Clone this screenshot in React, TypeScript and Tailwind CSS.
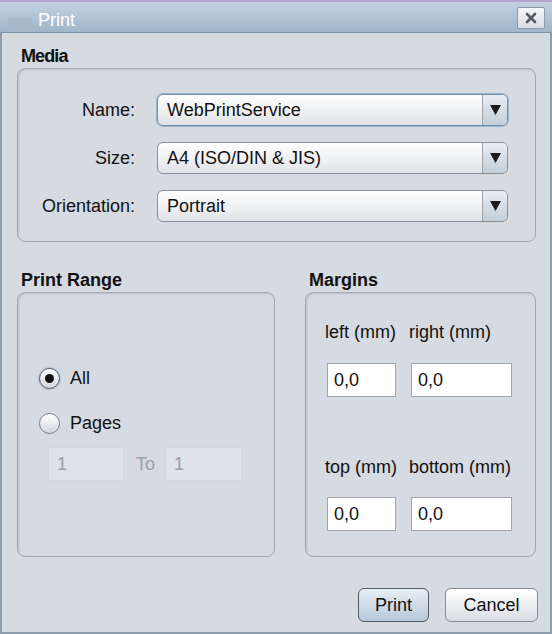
import React from 'react'

const font = { fontFamily: '"Liberation Sans", Arial, sans-serif' }

function Combo({ value, focused }: { value: string; focused?: boolean }) {
  return (
    <div
      className={`flex h-[32px] w-[351px] items-stretch rounded-[6px] border bg-gradient-to-b from-white via-[#f1f2f4] to-[#dfe2e6] ${
        focused
          ? 'border-[#6f8fb0] shadow-[0_0_0_1px_#9db6cf]'
          : 'border-[#8a8f97]'
      }`}
    >
      <div className="flex flex-1 items-center pl-[9px] text-[18px] text-[#111]">{value}</div>
      <div className="flex w-[25px] items-center justify-center rounded-r-[5px] border-l border-[#9aa0a8] bg-gradient-to-b from-[#e7edf3] to-[#c3cfdb]">
        <svg width="11" height="10" viewBox="0 0 11 10">
          <path d="M0 0h11L5.5 10z" fill="#1b1b1b" />
        </svg>
      </div>
    </div>
  )
}

function Radio({ checked, label }: { checked?: boolean; label: string }) {
  return (
    <div className="flex items-center gap-[10px]">
      <div
        className={`flex h-[21px] w-[21px] items-center justify-center rounded-full border bg-gradient-to-b from-white to-[#d3d7dd] ${
          checked ? 'border-[#4d5866] shadow-[0_0_0_1px_#b8c8d8]' : 'border-[#777d86]'
        }`}
      >
        {checked && <div className="h-[9px] w-[9px] rounded-full bg-[#111]" />}
      </div>
      <span className="text-[18px] text-[#111]">{label}</span>
    </div>
  )
}

function Field({ value, w }: { value: string; w: string }) {
  return (
    <div className={`flex h-[34px] ${w} items-center border border-[#a3a7ad] bg-white pl-[6px] text-[18px] text-[#111]`}>
      {value}
    </div>
  )
}

export default function App() {
  return (
    <div className="h-[634px] w-[552px] overflow-hidden bg-[#d6dae1]" style={font}>
      <div className="h-[2px] bg-[#b9a3cb]" />
      {/* title bar */}
      <div className="relative flex h-[30px] items-end bg-gradient-to-b from-[#c3d2e0] to-[#a0b5ca]">
        <div className="ml-[8px] h-[14px] w-[24px] bg-[#a6b9cc]" />
        <span className="mb-[3px] ml-[6px] text-[18px] leading-none text-white">Print</span>
        <div className="absolute right-[7px] top-[5px] flex h-[22px] w-[28px] items-center justify-center rounded-[2px] border border-[#8e99a6] bg-gradient-to-b from-[#f4f6f8] to-[#d9dee4]">
          <svg width="12" height="12" viewBox="0 0 12 12">
            <path d="M2 2l8 8M10 2l-8 8" stroke="#555b63" strokeWidth="2.6" strokeLinecap="round" />
          </svg>
        </div>
      </div>
      {/* body */}
      <div className="h-[602px] border-x-2 border-b-2 border-t border-[#8e9cad] border-t-[#7b8fa5] bg-[#d6dae1] pl-[15px] pr-[14px]">
        <div className="pl-[4px] pt-[14px] text-[18px] font-bold leading-[19px] tracking-[-0.9px] text-[#111]">Media</div>
        <div className="mt-[2px] h-[174px] rounded-[8px] border border-[#a4a9b1] pt-[25px] shadow-[inset_1px_1px_2px_rgba(0,0,0,0.12)]">
          <div className="flex flex-col gap-[16px]">
            <div className="flex items-center">
              <div className="w-[117px] text-right text-[18px] text-[#111]">Name:</div>
              <div className="ml-[22px]">
                <Combo value="WebPrintService" focused />
              </div>
            </div>
            <div className="flex items-center">
              <div className="w-[117px] text-right text-[18px] text-[#111]">Size:</div>
              <div className="ml-[22px]">
                <Combo value="A4 (ISO/DIN & JIS)" />
              </div>
            </div>
            <div className="flex items-center">
              <div className="w-[117px] text-right text-[18px] text-[#111]">Orientation:</div>
              <div className="ml-[22px]">
                <Combo value="Portrait" />
              </div>
            </div>
          </div>
        </div>

        <div className="mt-[29px] flex gap-[30px]">
          <div className="flex w-[258px] flex-col">
            <div className="pl-[4px] text-[18px] font-bold leading-[19px] text-[#111]">Print Range</div>
            <div className="mt-[2px] h-[265px] rounded-[8px] border border-[#a4a9b1] pl-[21px] pt-[72px] shadow-[inset_1px_1px_2px_rgba(0,0,0,0.12)]">
              <div className="flex flex-col gap-[18px]">
                <Radio checked label="All" />
                <Radio label="Pages" />
              </div>
              <div className="mt-[10px] flex items-center pl-[9px] text-[18px] text-[#9aa0a8]">
                <div className="flex h-[34px] w-[76px] items-center border border-[#d3d6db] bg-[#dfe2e7] pl-[8px]">1</div>
                <span className="ml-[12px] mr-[10px]">To</span>
                <div className="flex h-[34px] w-[77px] items-center border border-[#d3d6db] bg-[#dfe2e7] pl-[8px]">1</div>
              </div>
            </div>
          </div>
          <div className="flex w-[231px] flex-col">
            <div className="pl-[4px] text-[18px] font-bold leading-[19px] text-[#111]">Margins</div>
            <div className="mt-[2px] h-[265px] rounded-[8px] border border-[#a4a9b1] pl-[19px] pt-[26px] shadow-[inset_1px_1px_2px_rgba(0,0,0,0.12)]">
              <div className="flex text-[18px] text-[#111]">
                <span className="w-[84px]">left (mm)</span>
                <span>right (mm)</span>
              </div>
              <div className="mt-[17px] flex gap-[15px] pl-[2px]">
                <Field value="0,0" w="w-[69px]" />
                <Field value="0,0" w="w-[101px]" />
              </div>
              <div className="mt-[57px] flex text-[18px] text-[#111]">
                <span className="w-[84px]">top (mm)</span>
                <span>bottom (mm)</span>
              </div>
              <div className="mt-[16px] flex gap-[15px] pl-[2px]">
                <Field value="0,0" w="w-[69px]" />
                <Field value="0,0" w="w-[101px]" />
              </div>
            </div>
          </div>
        </div>

        <div className="-mr-[2px] mt-[31px] flex justify-end gap-[16px]">
          <button className="h-[34px] w-[71px] rounded-[6px] border border-[#4f5b69] bg-gradient-to-b from-[#e8eff6] to-[#b7c8d9] text-[18px] text-[#111]">
            Print
          </button>
          <button className="h-[34px] w-[93px] rounded-[6px] border border-[#868c94] bg-gradient-to-b from-white to-[#dadde2] text-[18px] text-[#111]">
            Cancel
          </button>
        </div>
      </div>
    </div>
  )
}
